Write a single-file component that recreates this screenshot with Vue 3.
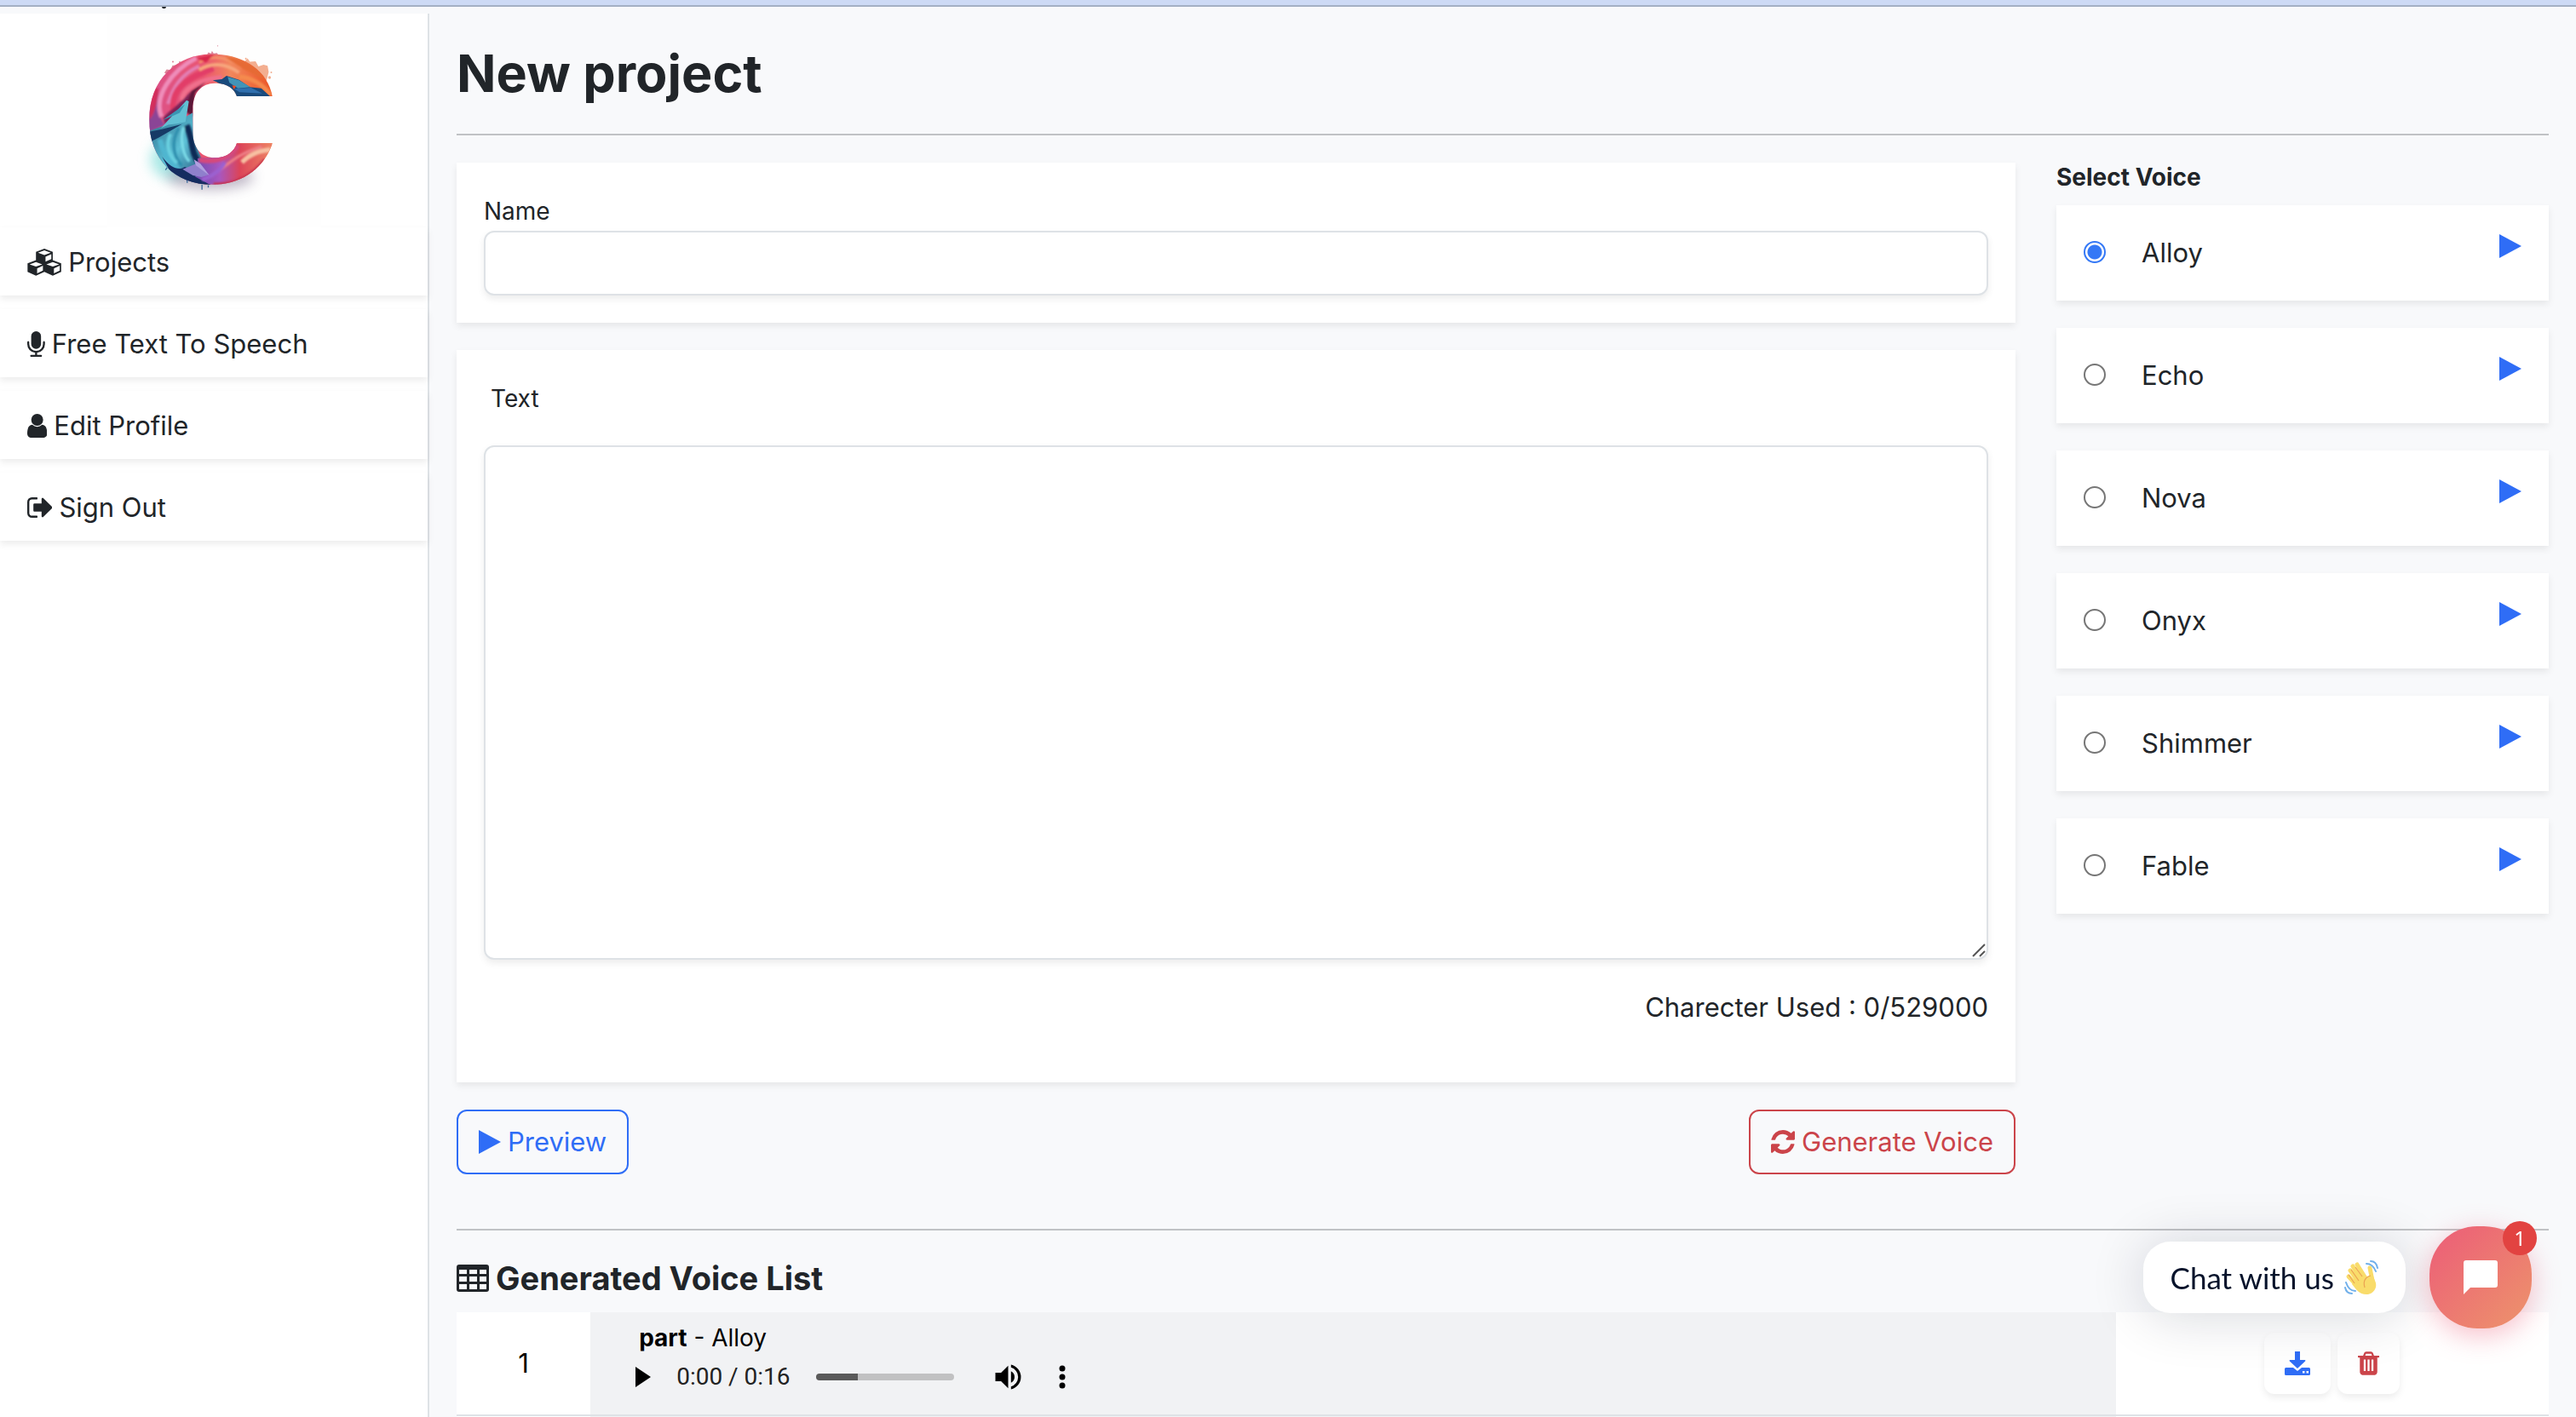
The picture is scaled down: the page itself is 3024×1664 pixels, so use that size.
<template>
    <div class="top-strip"><i class="tail"></i></div>
    <div class="layout">
        <aside class="sidebar">
            <svg class="logo" viewBox="-72 -72 750 750" aria-label="Logo">
                <defs>
                    <clipPath id="c-shape">
                        <path d="M507 218H382C374 190 346 172 306 172C258 172 228 206 228 262V345C228 402 260 434 306 434C346 434 374 412 382 383H507C478 470 400 528 296 528C165 528 75 440 75 300C75 160 170 70 296 70C405 70 490 125 507 218Z"/>
                    </clipPath>
                    <linearGradient id="warm" x1="0" y1="0" x2="1" y2="0">
                        <stop offset="0" stop-color="#d9508c"/>
                        <stop offset=".45" stop-color="#ea5570"/>
                        <stop offset=".65" stop-color="#f2875c"/>
                        <stop offset="1" stop-color="#ea4f20"/>
                    </linearGradient>
                    <linearGradient id="sea" x1="0" y1="0" x2="1" y2="1">
                        <stop offset="0" stop-color="#256080"/>
                        <stop offset=".5" stop-color="#5cc0d6"/>
                        <stop offset="1" stop-color="#14305c"/>
                    </linearGradient>
                    <linearGradient id="dusk" x1="0" y1="0" x2="1" y2="0">
                        <stop offset="0" stop-color="#6f4bb0"/>
                        <stop offset=".3" stop-color="#a857c0"/>
                        <stop offset=".55" stop-color="#dc4458"/>
                        <stop offset="1" stop-color="#f08c66"/>
                    </linearGradient>
                    <filter id="haze" x="-50%" y="-50%" width="200%" height="200%"><feGaussianBlur stdDeviation="22"/></filter>
                    <filter id="soft"><feGaussianBlur stdDeviation="3"/></filter>
                </defs>
                <rect x="-72" y="-72" width="750" height="750" fill="#fefefe"/>
                <ellipse cx="150" cy="440" rx="70" ry="65" fill="#5fd6d0" opacity=".55" filter="url(#haze)"/>
                <ellipse cx="290" cy="500" rx="150" ry="45" fill="#5b4a70" opacity=".4" filter="url(#haze)"/>
                <path d="M228 262C228 206 258 172 306 172C346 172 374 190 382 218H560V383H382C374 412 346 434 306 434C260 434 228 402 228 345Z" fill="#fefefe"/>
                <g fill="#f3ae90">
                    <path d="M410 95l10-10 8 12 20-2 10 18 18-6 14 4 4 22-8 32z"/>
                    <circle cx="497" cy="152" r="5"/><circle cx="503" cy="134" r="3"/><circle cx="414" cy="86" r="3"/>
                </g>
                <g fill="#dc8498">
                    <path d="M128 136l8-12 14 2 6-16 14-2 24-4-50 40z"/>
                    <circle cx="158" cy="97" r="3"/><circle cx="182" cy="98" r="3"/><circle cx="315" cy="41" r="2"/>
                    <path d="M278 72l4-8 10 4 3-9 6 9 12-2 4 7z"/>
                </g>
                <path d="M208 505v17M260 528v18M282 530v8M140 465l-8 12" stroke="#3c6a9c" stroke-width="4"/>
                <g clip-path="url(#c-shape)">
                    <rect x="60" y="60" width="460" height="480" fill="url(#warm)"/>
                    <g filter="url(#soft)">
                        <path d="M60 340C70 240 100 200 108 190C100 260 112 300 130 318L60 350z" fill="#8b4596"/>
                        <path d="M94 190q-22 50-18 110q26-30 32-110z" fill="#d32f5c"/>
                        <path d="M118 290C90 220 150 130 240 84" stroke="#ef8dba" stroke-width="16" fill="none"/>
                        <path d="M140 245C160 180 190 140 250 112" stroke="#e37fb4" stroke-width="12" fill="none"/>
                        <path d="M160 270C150 200 190 160 300 120" stroke="#e23e68" stroke-width="20" fill="none"/>
                        <path d="M190 232C190 190 260 156 330 152" stroke="#f0708c" stroke-width="16" fill="none"/>
                        <path d="M250 125C290 100 340 100 390 135" stroke="#f7a67d" stroke-width="12" fill="none"/>
                        <path d="M250 100C300 70 350 80 400 118" stroke="#f5956a" stroke-width="8" fill="none"/>
                        <path d="M240 84l64-14-30 30z" fill="#d8284c"/>
                        <path d="M340 80C410 84 460 120 480 160L400 120z" fill="#e66b34"/>
                        <path d="M390 150C430 150 480 180 500 215" stroke="#f58a4d" stroke-width="16" fill="none"/>
                        <path d="M222 200L272 168 236 206 228 290 196 268z" fill="#5c1238"/>
                        <path d="M124 292C150 265 190 240 220 200L200 262 130 318z" fill="#7d2458"/>
                    </g>
                    <path d="M298 162l32-4 16-12 44 14 38 26 40 4 40 36H380L360 190 320 172z" fill="#194a7c"/>
                    <path d="M350 150l40 12 40 24-44 4-30-20z" fill="#4294b8"/>
                    <path d="M372 192l60-4 40 20-80-4z" fill="#2f6fae"/>
                    <path d="M366 180l14 2-8 12z" fill="#ee4a20"/>
                    <path d="M60 345l56-20 60-20 52-30 4 100 30 70 30 90H180L60 420z" fill="url(#sea)"/>
                    <path d="M60 345L120 334 190 316 110 362 75 380z" fill="#163a66"/>
                    <path d="M116 330l90-98 8 4-12 72-30 6-30 4z" fill="#62c0d4"/>
                    <path d="M122 302l78-56-18 30z" fill="#3a95b4"/>
                    <g filter="url(#soft)" fill="none">
                        <path d="M206 320C230 370 220 420 250 450" stroke="#102c56" stroke-width="22"/>
                        <path d="M178 330C150 380 160 430 190 462" stroke="#2f8fae" stroke-width="10"/>
                        <path d="M196 326C180 370 196 430 216 446" stroke="#7bdbe8" stroke-width="10"/>
                        <path d="M112 370C120 410 140 440 176 474" stroke="#4fb6d0" stroke-width="18"/>
                        <path d="M150 350C130 390 146 430 172 452" stroke="#69d0e0" stroke-width="12"/>
                    </g>
                    <path d="M120 430C150 470 180 480 200 466L250 488 300 540H180z" fill="#152c60"/>
                    <path d="M244 436L300 434 382 370H520V540H310L236 500 250 470z" fill="url(#dusk)"/>
                    <path d="M192 474l44-18 48 38-26 8-30-6z" fill="#8f80cc"/>
                    <path d="M232 440l22 14 34 44-50-38z" fill="#b0a0e0"/>
                    <g filter="url(#soft)" fill="none">
                        <path d="M250 440C300 452 350 440 385 390" stroke="#d6487c" stroke-width="18"/>
                        <path d="M290 500C350 460 380 420 470 395" stroke="#ee7f86" stroke-width="10"/>
                        <path d="M400 450C430 420 460 410 500 405" stroke="#f7c0a2" stroke-width="16"/>
                        <path d="M300 526C380 530 440 490 480 440" stroke="#c43250" stroke-width="10"/>
                        <path d="M260 510C300 500 330 470 340 450" stroke="#9b60d0" stroke-width="14"/>
                    </g>
                </g>
            </svg>
            <nav>
                <a v-for="item in menu" :key="item.label" href="#" class="menu-item">
                    <svg :viewBox="item.box" :class="['icon', item.icon]"><path :d="item.path"/></svg>
                    {{ item.label }}
                </a>
            </nav>
        </aside>

        <main class="content">
            <h1>New project</h1>
            <hr>

            <div class="columns">
                <section class="editor">
                    <div class="card">
                        <div class="field-label"><label for="name">Name</label></div>
                        <input id="name" v-model="name" type="text" class="text-box">
                    </div>
                    <div class="card">
                        <div class="field-label indented"><label for="text">Text</label></div>
                        <div class="text-area">
                            <textarea id="text" v-model="text" class="text-box"></textarea>
                            <svg class="grip" viewBox="0 0 16 16"><path d="M1 15L15 1M9 15l6-6"/></svg>
                        </div>
                        <p class="counter">Charecter Used : {{ text.length }}/529000</p>
                    </div>
                    <div class="actions">
                        <button type="button" class="btn blue">
                            <svg class="play" viewBox="0 0 26 28"><path d="M0 0l26 14L0 28z"/></svg>
                            Preview
                        </button>
                        <button type="button" class="btn red">
                            <svg class="refresh" viewBox="128 128 1536 1536"><path :d="refreshPath"/></svg>
                            Generate Voice
                        </button>
                    </div>
                </section>

                <section class="voices">
                    <h2>Select Voice</h2>
                    <div v-for="v in voices" :key="v" class="card voice">
                        <input :id="v" v-model="voice" type="radio" name="voice" :value="v">
                        <label :for="v">{{ v }}</label>
                        <button type="button" class="sample" :aria-label="'Play ' + v">
                            <svg class="play" viewBox="0 0 26 28"><path d="M0 0l26 14L0 28z"/></svg>
                        </button>
                    </div>
                </section>
            </div>

            <hr class="list-rule">
            <h3>
                <svg class="grid-icon" viewBox="0 0 38 32">
                    <path fill-rule="evenodd" d="M3 0h32a3 3 0 0 1 3 3v26a3 3 0 0 1-3 3H3a3 3 0 0 1-3-3V3a3 3 0 0 1 3-3zM3 6v5h9V6zM15 6v5h9V6zM27 6v5h8V6zM3 14v6h9v-6zM15 14v6h9v-6zM27 14v6h8v-6zM3 23v6h9v-6zM15 23v6h9v-6zM27 23v6h8v-6z"/>
                </svg>
                Generated Voice List
            </h3>
            <table>
                <tbody>
                    <tr>
                        <td class="number">1</td>
                        <td class="clip">
                            <div class="clip-name"><b>part</b> - Alloy</div>
                            <div class="player">
                                <button type="button" aria-label="Play"><svg class="p-play" viewBox="0 0 18 24"><path d="M0 0l18 12L0 24z"/></svg></button>
                                <span class="time">0:00 / 0:16</span>
                                <input type="range" class="seek" min="0" max="16" value="0" aria-label="Seek">
                                <button type="button" aria-label="Mute">
                                    <svg class="p-volume" viewBox="3 3 18 18"><path d="M3 9v6h4l5 5V4L7 9zm13.5 3A4.5 4.5 0 0 0 14 7.970v8.050A4.500 4.500 0 0 0 16.500 12zM14 3.230v2.060a7 7 0 0 1 0 13.420v2.060a9 9 0 0 0 0-17.540z"/></svg>
                                </button>
                                <button type="button" aria-label="More">
                                    <svg class="p-more" viewBox="0 0 8 28"><circle cx="4" cy="4" r="3.500"/><circle cx="4" cy="14" r="3.500"/><circle cx="4" cy="24" r="3.500"/></svg>
                                </button>
                            </div>
                        </td>
                        <td>
                            <div class="row-actions">
                                <button type="button" class="tile blue" aria-label="Download">
                                    <svg class="download" viewBox="0 0 30 28"><path fill-rule="evenodd" d="M12 0h6v10h5.500c1 0 1.200.8.600 1.400L15 20 5.900 11.400C5.300 10.800 5.500 10 6.500 10H12zM1.500 19H10l5 4 5-4h8.500a1.500 1.500 0 0 1 1.500 1.500v6a1.500 1.500 0 0 1-1.500 1.500h-27A1.500 1.500 0 0 1 0 26.500v-6A1.500 1.500 0 0 1 1.500 19zM21 23v2.500h2.500V23zM25.500 23v2.500H28V23z"/></svg>
                                </button>
                                <button type="button" class="tile red" aria-label="Delete">
                                    <svg class="trash" viewBox="192 128 1408 1536"><path :d="trashPath"/></svg>
                                </button>
                            </div>
                        </td>
                    </tr>
                    <tr class="next-row"><td></td><td class="clip"></td><td></td></tr>
                </tbody>
            </table>
        </main>
    </div>

    <div class="chat">
        <div class="chat-bubble">
            Chat with us
            <svg class="wave" viewBox="0 0 40 40">
                <g fill="none" stroke="#f9dc6b" stroke-linecap="round" stroke-width="5">
                    <path d="M15 5l10 16M10 7l11 17M7 12l12 16M5 19l12 13M30 9l3 15"/>
                </g>
                <path d="M14 17l13 2 6-3 3 8c4 8-2 16-10 16-9 0-12-6-17-12z" fill="#f9dc6b"/>
                <path d="M24 32c-2-7 0-12 7-14M13 8l8 11M8 11l9 13M5 17l7 10" fill="none" stroke="#eba352" stroke-width="1.200"/>
                <g fill="none" stroke="#71b0ea" stroke-linecap="round" stroke-width="2">
                    <path d="M31 1c4 0 7 3 8 8M26 4c6 0 9 4 11 9M1 32c1 5 4 7 8 7M2 26c2 6 6 10 11 10"/>
                </g>
            </svg>
        </div>
        <button type="button" class="chat-button" aria-label="Open chat">
            <svg viewBox="0 0 40 40"><path d="M3 0h34a3 3 0 0 1 3 3v26a3 3 0 0 1-3 3H8l-8 8V3a3 3 0 0 1 3-3z"/></svg>
            <span class="badge">1</span>
        </button>
    </div>
</template>

<style>

body {
    background: #f8f9fb;
}

</style>

<style scoped>

* {
    box-sizing: border-box;
}

/* PAGE */

.top-strip {
    position: relative;
    height: 8px;
    background: #cddaf5;
    border-bottom: 2px solid #a4b0c4;
}

/* end of a letter peeking out below the strip */
.tail {
    position: absolute;
    top: 8px;
    left: 190px;
    width: 5px;
    height: 2px;
    border-radius: 0 0 2px 2px;
    background: #212529;
}

.layout {
    display: flex;
    margin-top: 8px;
    min-height: calc(100vh - 16px);
    font-family: Inter, "Liberation Sans", sans-serif;
    font-size: 31px;
    line-height: 48px;
    color: #212529;
}

button {
    font: inherit;
    background: none;
    border: none;
    padding: 0;
}

svg {
    fill: currentColor;
    flex: none;
}

/* SIDEBAR */

.sidebar {
    flex: 0 0 504px;
    background: #fff;
    border-right: 2px solid #dee2e6;
}

.logo {
    display: block;
    width: 251px;
    height: 251px;
    margin: 0 auto;
}

.menu-item {
    display: flex;
    align-items: center;
    gap: 8px;
    height: 80px;
    margin-bottom: 16px;
    padding: 2px 32px 0;
    color: #212529;
    text-decoration: none;
    box-shadow: 0 4px 8px rgba(0, 0, 0, 0.075);
}

.icon {
    height: 30px;
}

.cubes {
    height: 32px;
}

.user {
    height: 28px;
}

.sign-out {
    height: 24px;
}

/* CONTENT */

.content {
    flex: 1;
    min-width: 0;
    padding: 32px 32px 0;
}

h1 {
    margin: 0;
    font-size: 61px;
    line-height: 77px;
}

hr {
    height: 2px;
    margin: 32px 0;
    border: none;
    background: #c0c2c5;
}

.columns {
    display: grid;
    grid-template-columns: repeat(12, 1fr);
    gap: 48px;
}

.editor {
    grid-column: span 9;
}

.voices {
    grid-column: span 3;
}

.card {
    margin-bottom: 32px;
    padding: 32px;
    background: #fff;
    box-shadow: 0 4px 8px rgba(0, 0, 0, 0.075);
}

.field-label label {
    font-size: 28px;
    line-height: 42px;
}

.indented {
    padding: 0 8px;
    margin-bottom: 32px;
}

.text-box {
    display: block;
    width: 100%;
    height: 76px;
    padding: 12px 24px;
    font: inherit;
    color: inherit;
    background: #fff;
    border: 2px solid #dee2e6;
    border-radius: 12px;
    box-shadow: 0 4px 8px rgba(0, 0, 0, 0.075);
    resize: none;
}

.text-area {
    position: relative;
}

.text-area .text-box {
    height: 604px;
}

.grip {
    position: absolute;
    right: 3px;
    bottom: 3px;
    width: 16px;
    height: 16px;
    fill: none;
    stroke: #555;
    stroke-width: 2;
}

.counter {
    margin: 32px 0;
    text-align: right;
}

.actions {
    display: flex;
    justify-content: space-between;
}

.btn {
    display: flex;
    align-items: center;
    gap: 8px;
    padding: 12px 24px;
    border: 2px solid currentColor;
    border-radius: 12px;
}

.blue {
    color: #2f6df6;
}

.red {
    color: #cb444a;
}

.play {
    display: block;
    width: 26px;
    height: 28px;
}

.refresh {
    width: 28px;
    height: 28px;
}

/* VOICES */

h2 {
    margin: 0 0 16px;
    font-size: 28px;
    line-height: 34px;
}

.voice {
    display: flex;
    align-items: flex-start;
    height: 112px;
}

.voice input {
    appearance: none;
    width: 26px;
    height: 26px;
    margin: 10px 42px 0 0;
    border: 2px solid #767676;
    border-radius: 50%;
}

.voice input:checked {
    border-color: #3478f6;
    background: radial-gradient(circle, #3478f6 8px, #fff 9px);
}

.voice label {
    flex: 1;
}

.sample {
    padding-top: 2px;
    color: #2f6df6;
}

/* GENERATED LIST */

.list-rule {
    margin-top: 64px;
}

h3 {
    display: flex;
    align-items: center;
    gap: 8px;
    margin: 0 0 16px;
    font-size: 38px;
    line-height: 48px;
}

.grid-icon {
    width: 38px;
    height: 32px;
}

table {
    width: 100%;
    table-layout: fixed;
    border-collapse: collapse;
    color: #000;
}

td {
    height: 121px;
    padding: 0;
    background: #fff;
    border-bottom: 2px solid #dee2e6;
}

.number {
    width: 6.4%;
    text-align: center;
}

.clip {
    width: 72.9%;
    padding: 8px 53px 18px;
    background: #f1f2f4;
}

.next-row td {
    height: 3px;
    padding: 0;
    border: none;
}

.clip-name {
    padding-left: 4px;
    font-size: 28px;
    line-height: 42px;
}

.player {
    display: flex;
    align-items: center;
    height: 50px;
}

.player svg {
    display: block;
}

.p-play {
    width: 18px;
    height: 24px;
}

.time {
    margin: 0 30px;
    font-family: Roboto, sans-serif;
    font-size: 28px;
    color: #222;
}

.seek {
    appearance: none;
    width: 162px;
    height: 8px;
    margin: 0 48px 0 0;
    border-radius: 4px;
    background: linear-gradient(to right, #5a5a5a 30%, #c1c1c2 30%);
}

.seek::-webkit-slider-thumb {
    appearance: none;
    width: 0;
}

.p-volume {
    width: 31px;
    height: 30px;
    margin-right: 44px;
}

.p-more {
    width: 8px;
    height: 28px;
}

.row-actions {
    display: flex;
    justify-content: center;
    gap: 8px;
}

.tile {
    display: flex;
    align-items: center;
    padding: 0 24px;
    height: 72px;
    border-radius: 12px;
    box-shadow: 0 4px 8px rgba(0, 0, 0, 0.075);
}

.download {
    width: 30px;
    height: 28px;
}

.trash {
    width: 25px;
    height: 28px;
}

/* CHAT WIDGET */

.chat {
    position: fixed;
    right: 52px;
    bottom: 104px;
    display: flex;
    align-items: center;
    gap: 28px;
}

.chat-bubble {
    display: flex;
    align-items: center;
    gap: 12px;
    height: 84px;
    padding: 0 32px;
    font-family: Lato, sans-serif;
    font-size: 35px;
    color: #06132b;
    background: #fff;
    border-radius: 32px;
    box-shadow: 0 4px 64px rgba(0, 18, 46, 0.16);
}

.wave {
    width: 40px;
    height: 40px;
}

.chat-button {
    position: relative;
    display: flex;
    align-items: center;
    justify-content: center;
    width: 120px;
    height: 120px;
    color: #fff;
    border-radius: 56px;
    background: linear-gradient(135deg, #ec5c78, #ed946b);
    box-shadow: 0 8px 32px rgba(236, 92, 120, 0.4);
}

.chat-button svg {
    width: 40px;
    height: 40px;
}

.badge {
    position: absolute;
    top: -6px;
    right: -6px;
    width: 40px;
    border-radius: 50%;
    background: #e24341;
    font-family: "Noto Sans", sans-serif;
    font-size: 24px;
    line-height: 40px;
    text-align: center;
}

</style>

<script setup>
    import { ref } from 'vue'

    const name = ref('')
    const text = ref('')
    const voice = ref('Alloy')
    const voices = ['Alloy', 'Echo', 'Nova', 'Onyx', 'Shimmer', 'Fable']


    /* ------- ICONS --------------------------------*/

    // one box: solid left face, open top and right faces
    function cube(x, y) {
        return `M${x} ${y}l29 11v29l-29 13-29-13V${y + 11}zm0 6l-22 8 22 8 22-8zm4 22v17l20-9V${y + 19}z`
    }

    const menu = [
        {
            label: 'Projects',
            icon: 'cubes',
            box: '0 0 118 94',
            path: cube(59, 0) + cube(30, 40) + cube(88, 40)
        },
        {
            label: 'Free Text To Speech',
            icon: 'mic',
            box: '320 0 1152 1664',
            path: 'M1472 704v128q0 221-147.500 384.500t-364.500 187.500v132h256q26 0 45 19t19 45-19 45-45 19h-640q-26 0-45-19t-19-45 19-45 45-19h256v-132q-217-24-364.500-187.500t-147.500-384.500v-128q0-26 19-45t45-19 45 19 19 45v128q0 185 131.500 316.500t316.500 131.500 316.500-131.500 131.500-316.500v-128q0-26 19-45t45-19 45 19 19 45zm-256-384v512q0 132-94 226t-226 94-226-94-94-226v-512q0-132 94-226t226-94 226 94 94 226z'
        },
        {
            label: 'Edit Profile',
            icon: 'user',
            box: '256 128 1280 1536',
            path: 'M1536 1399q0 109-62.500 187t-150.500 78h-854q-88 0-150.500-78t-62.500-187q0-85 8.500-160.500t31.500-152 58.500-131 94-89 134.500-34.500q131 128 313 128t313-128q76 0 134.500 34.500t94 89 58.500 131 31.500 152 8.500 160.500zm-256-887q0 159-112.500 271.500t-271.500 112.500-271.500-112.500-112.500-271.500 112.500-271.500 271.500-112.500 271.500 112.500 112.500 271.500z'
        },
        {
            label: 'Sign Out',
            icon: 'sign-out',
            box: '64 256 1568 1280',
            path: 'M704 1440q0 4 1 20t.5 26.500-3 23.500-10 19.500-20.500 6.500h-320q-119 0-203.500-84.500t-84.500-203.500v-704q0-119 84.500-203.500t203.500-84.500h320q13 0 22.500 9.500t9.500 22.500q0 4 1 20t.5 26.500-3 23.500-10 19.500-20.500 6.500h-320q-66 0-113 47t-47 113v704q0 66 47 113t113 47h312l11.500 1 11.500 3 8 5.500 7 9 2 13.500zm928-544q0 26-19 45l-544 544q-19 19-45 19t-45-19-19-45v-288h-448q-26 0-45-19t-19-45v-384q0-26 19-45t45-19h448v-288q0-26 19-45t45-19 45 19l544 544q19 19 19 45z'
        }
    ]

    const refreshPath = 'M1639 1056q0 5-1 7-64 268-268 434.500t-478 166.500q-146 0-282.500-55t-243.500-157l-129 129q-19 19-45 19t-45-19-19-45v-448q0-26 19-45t45-19h448q26 0 45 19t19 45-19 45l-137 137q71 66 161 102t187 36q134 0 250-65t186-179q11-17 53-117 8-23 30-23h192q13 0 22.500 9.500t9.500 22.500zm25-800v448q0 26-19 45t-45 19h-448q-26 0-45-19t-19-45 19-45l138-138q-148-137-349-137-134 0-250 65t-186 179q-11 17-53 117-8 23-30 23h-199q-13 0-22.500-9.500t-9.500-22.500v-7q65-268 270-434.500t480-166.500q146 0 284 55.500t245 156.500l130-129q19-19 45-19t45 19 19 45z'

    const bar = 'v-704q0-14-9-23t-23-9h-64q-14 0-23 9t-9 23v704q0 14 9 23t23 9h64q14 0 23-9t9-23z'
    const trashPath = `M704 1376${bar}m256 0${bar}m256 0${bar}m-544-992h448l-48-117q-7-9-17-11h-317q-10 2-17 11zm928 32v64q0 14-9 23t-23 9h-96v948q0 83-47 143.500t-113 60.500h-832q-66 0-113-58.500t-47-141.500v-952h-96q-14 0-23-9t-9-23v-64q0-14 9-23t23-9h309l70-167q15-37 54-63t79-26h320q40 0 79 26t54 63l70 167h309q14 0 23 9t9 23z`

</script>
